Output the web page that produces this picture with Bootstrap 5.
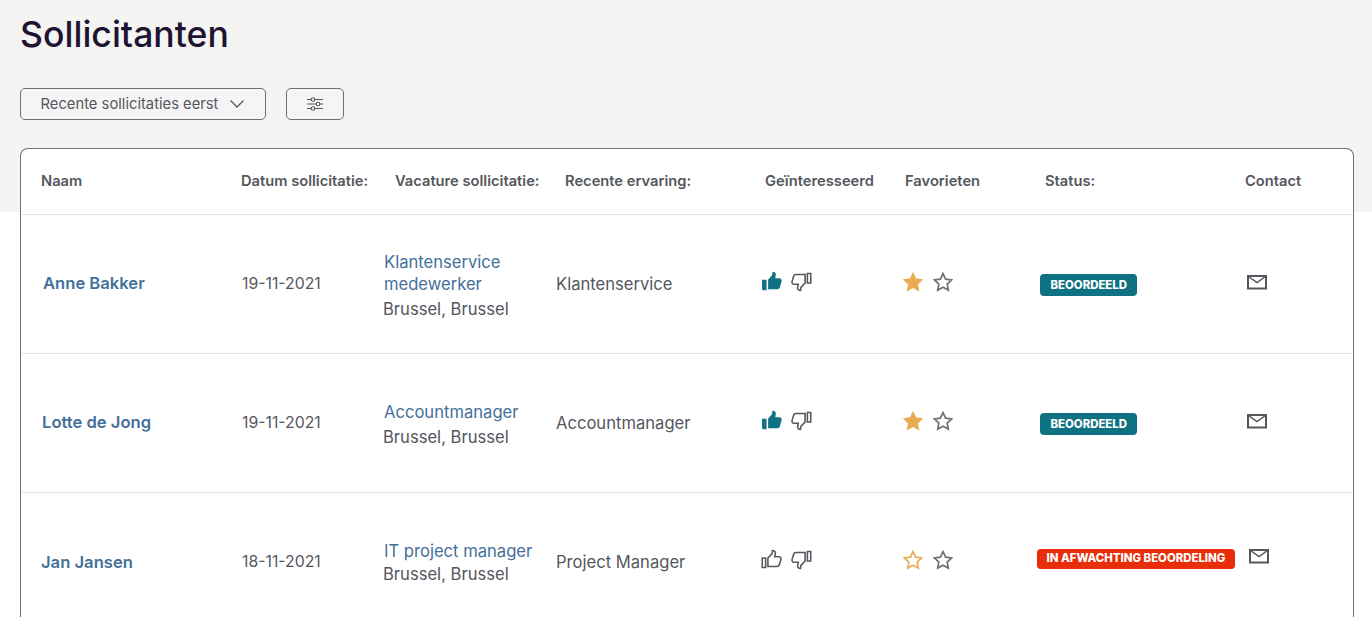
<!DOCTYPE html>
<html lang="nl">
<head>
<meta charset="utf-8">
<title>Sollicitanten</title>
<link href="https://cdn.jsdelivr.net/npm/bootstrap@5.3.0/dist/css/bootstrap.min.css" rel="stylesheet">
<style>
html,body{height:617px;overflow:hidden}
body{font-family:"Inter","Liberation Sans",sans-serif;color:#55565e;background:linear-gradient(#f4f4f3 212px,#fff 212px);font-size:16.6px}
.page-wrap{padding:0 18px 0 20px}
.page-title{font-size:35.6px;font-weight:500;color:#1e1330;line-height:44px;margin:13px 0 31px}
.tool-btn{height:32px;border:1px solid #6e707a;border-radius:5px;background:#f5f5f6;color:#55565e;font-size:14.750px;padding:0;display:flex;align-items:center;justify-content:center}
.sort-btn{width:246px;gap:11px}
.filter-btn{width:58px}
.toolbar{gap:20px;margin-bottom:28px}
.sheet{border:1px solid #6e707a;border-bottom:0;border-radius:8px 8px 0 0;background:#fff;height:480px}
.head-row{display:grid;grid-template-columns:200px 154px 170px 200px 140px 140px 200px 1fr;padding:0 0 0 20px;height:66px;align-items:center;border-bottom:1px solid #e2e3e5;font-size:14.700px;font-weight:600;color:#55565e}
.data-row{display:grid;grid-template-columns:200px 141px 173px 206px 141px 137px 207px 1fr;padding-left:21px;height:139px;align-items:center;border-bottom:1px solid #e2e3e5}
.person{color:#44709a;font-weight:600;text-decoration:none}
.name-cell{margin-top:-2px}
.date-txt{font-size:15.800px}
.job{color:#44709a;text-decoration:none;display:block;margin-left:1px;line-height:22px}
.place{line-height:28px;display:block}
.place-tight{line-height:24px}
.job-cell{margin-top:6px}
.job-cell-low{margin-top:2px}
.ico-pair{display:flex;align-items:center;gap:8px;margin-top:-5px}
.thumb-pair{gap:7px;margin-left:-1px}
.star-pair{gap:10px;margin-top:-4px}
.status-tag{font-size:11.400px;font-weight:800;color:#fff;border-radius:4px;padding:0 10.500px;height:22px;display:inline-flex;align-items:center;white-space:nowrap}
.tag-teal{background:#0f7282}
.tag-red{background:#e72d0a;margin-left:-3px;height:20px;padding:0 9.500px;font-size:11.400px}
.tag-cell{margin-top:-1px}
.tag-cell-low{margin-top:-11px}
.mail-ico{margin-top:-5px}
.mail-low{margin-top:-13px;margin-left:2px}
.nudge-a{margin-left:1px}
.nudge-b{margin-left:-1px}
.name-cell-low{margin-top:0}
</style>
</head>
<body>
<svg width="0" height="0" class="d-block" aria-hidden="true">
<defs>
<path id="star" d="M10 1.600l2.600 5.500 6 .8-4.400 4.200 1.100 6L10 15.200l-5.300 2.900 1.100-6L1.400 7.900l6-.8z"/>
<path id="thumb-out" d="M1.200 8.500h3.200v9.200H1.200zM6.600 8.600l4-4.200.4-3c2 0 3 1.300 2.700 3l-.6 3h4c1.500 0 2.300 1.300 1.900 2.700l-1.500 5c-.3 1-1.100 1.600-2.200 1.600H6.600z"/>
<path id="thumb-fill" d="M1 8.300h4.300v10H2.300A1.300 1.300 0 0 1 1 17zM6.800 8l3.700-4 .5-3.200c2.300-.1 3.500 1.400 3.100 3.200l-.5 2.800h4c1.600 0 2.500 1.300 2.100 2.800l-1.600 5.800c-.3 1.100-1.200 1.900-2.400 1.900H6.800z"/>
</defs>
</svg>
<main class="page-wrap">
<h1 class="page-title">Sollicitanten</h1>
<div class="d-flex toolbar">
<button type="button" class="tool-btn sort-btn">Recente sollicitaties eerst
<svg width="16" height="10" viewBox="0 0 16 10" fill="none" stroke="#55565e" stroke-width="1.300"><path d="M1.500 1.500L8 8l6.500-6.500"/></svg></button>
<button type="button" class="tool-btn filter-btn" aria-label="Filter">
<svg width="16" height="14" viewBox="0 0 16 14" fill="none" stroke="#55565e" stroke-width="1.100"><path d="M0 2.500h4M8 2.500h8M0 7h9M13 7h3M0 11.500h4M8 11.500h8"/><circle cx="6" cy="2.500" r="1.800"/><circle cx="11" cy="7" r="1.800"/><circle cx="6" cy="11.500" r="1.800"/></svg></button>
</div>
<section class="sheet">
<div class="head-row"><div>Naam</div><div>Datum sollicitatie:</div><div>Vacature sollicitatie:</div><div>Recente ervaring:</div><div>Geïnteresseerd</div><div>Favorieten</div><div>Status:</div><div>Contact</div></div>

<div class="data-row">
<div class="name-cell"><a href="#" class="person nudge-a">Anne Bakker</a></div><div class="date-txt">19-11-2021</div>
<div class="job-cell"><a href="#" class="job">Klantenservice<br>medewerker</a><span class="place">Brussel, Brussel</span></div>
<div>Klantenservice</div>
<div class="ico-pair thumb-pair"><svg width="22" height="21" viewBox="0 0 21 20" fill="#0f7282"><use href="#thumb-fill"/></svg><svg width="22" height="21" viewBox="0 0 21 20" fill="none" stroke="#55565e" stroke-width="1.500" transform="rotate(180)"><use href="#thumb-out"/></svg></div>
<div class="ico-pair star-pair"><svg width="20" height="20" viewBox="0 0 20 20" fill="#e8ac54" stroke="#e8ac54" stroke-width="1.500"><use href="#star"/></svg><svg width="20" height="20" viewBox="0 0 20 20" fill="none" stroke="#6e707a" stroke-width="1.700"><use href="#star"/></svg></div>
<div class="tag-cell"><span class="status-tag tag-teal">BEOORDEELD</span></div>
<div><svg class="mail-ico" width="20" height="15" viewBox="0 0 20 15" fill="none" stroke="#55565e" stroke-width="2"><rect x="1" y="1" width="18" height="12.500"/><path d="M1.500 1.500L10 7.500l8.500-6" stroke-width="1.500"/></svg></div>
</div>

<div class="data-row">
<div class="name-cell"><a href="#" class="person">Lotte de Jong</a></div><div class="date-txt">19-11-2021</div>
<div class="job-cell"><a href="#" class="job">Accountmanager</a><span class="place">Brussel, Brussel</span></div>
<div>Accountmanager</div>
<div class="ico-pair thumb-pair"><svg width="22" height="21" viewBox="0 0 21 20" fill="#0f7282"><use href="#thumb-fill"/></svg><svg width="22" height="21" viewBox="0 0 21 20" fill="none" stroke="#55565e" stroke-width="1.500" transform="rotate(180)"><use href="#thumb-out"/></svg></div>
<div class="ico-pair star-pair"><svg width="20" height="20" viewBox="0 0 20 20" fill="#e8ac54" stroke="#e8ac54" stroke-width="1.500"><use href="#star"/></svg><svg width="20" height="20" viewBox="0 0 20 20" fill="none" stroke="#6e707a" stroke-width="1.700"><use href="#star"/></svg></div>
<div class="tag-cell"><span class="status-tag tag-teal">BEOORDEELD</span></div>
<div><svg class="mail-ico" width="20" height="15" viewBox="0 0 20 15" fill="none" stroke="#55565e" stroke-width="2"><rect x="1" y="1" width="18" height="12.500"/><path d="M1.500 1.500L10 7.500l8.500-6" stroke-width="1.500"/></svg></div>
</div>

<div class="data-row">
<div class="name-cell-low"><a href="#" class="person nudge-b">Jan Jansen</a></div><div class="date-txt">18-11-2021</div>
<div class="job-cell-low"><a href="#" class="job">IT project manager</a><span class="place place-tight">Brussel, Brussel</span></div>
<div>Project Manager</div>
<div class="ico-pair thumb-pair"><svg width="22" height="21" viewBox="0 0 21 20" fill="none" stroke="#55565e" stroke-width="1.500"><use href="#thumb-out"/></svg><svg width="22" height="21" viewBox="0 0 21 20" fill="none" stroke="#55565e" stroke-width="1.500" transform="rotate(180)"><use href="#thumb-out"/></svg></div>
<div class="ico-pair star-pair"><svg width="20" height="20" viewBox="0 0 20 20" fill="none" stroke="#e8ac54" stroke-width="1.700"><use href="#star"/></svg><svg width="20" height="20" viewBox="0 0 20 20" fill="none" stroke="#6e707a" stroke-width="1.700"><use href="#star"/></svg></div>
<div class="tag-cell-low"><span class="status-tag tag-red">IN AFWACHTING BEOORDELING</span></div>
<div><svg class="mail-ico mail-low" width="20" height="15" viewBox="0 0 20 15" fill="none" stroke="#55565e" stroke-width="2"><rect x="1" y="1" width="18" height="12.500"/><path d="M1.500 1.500L10 7.500l8.500-6" stroke-width="1.500"/></svg></div>
</div>
</section>
</main>
<script src="https://cdn.jsdelivr.net/npm/bootstrap@5.3.0/dist/js/bootstrap.bundle.min.js"></script>
</body>
</html>
